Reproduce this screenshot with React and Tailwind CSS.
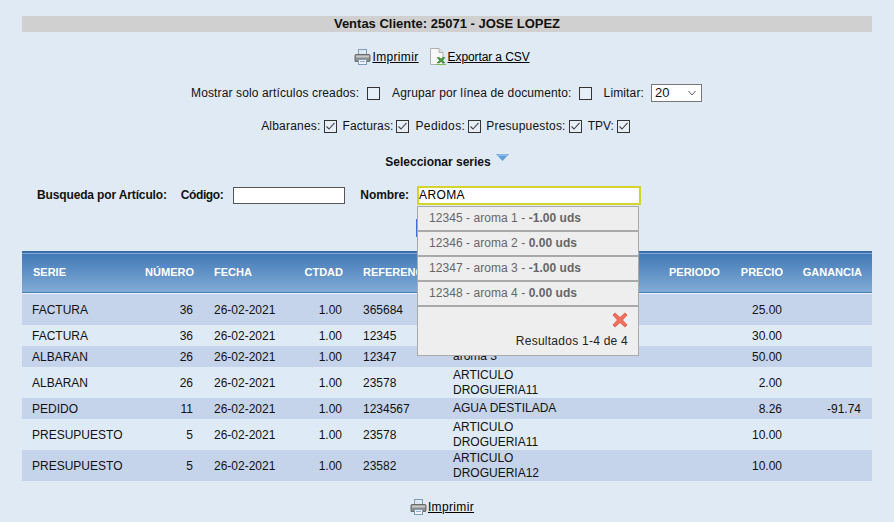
const rows = [
  ["FACTURA", "36", "26-02-2021", "1.00", "365684", "", "", "25.00", "", "h-8 [&>td]:pt-[2px]", "bg-[#c5d4eb]"],
  ["FACTURA", "36", "26-02-2021", "1.00", "12345", "", "", "30.00", "", "h-[21px]", "bg-[#deeaf6]"],
  ["ALBARAN", "26", "26-02-2021", "1.00", "12347", "aroma 3", "", "50.00", "", "h-[21px]", "bg-[#c5d4eb]"],
  ["ALBARAN", "26", "26-02-2021", "1.00", "23578", "ARTICULO DROGUERIA11", "", "2.00", "", "h-[31px]", "bg-[#deeaf6]"],
  ["PEDIDO", "11", "26-02-2021", "1.00", "1234567", "AGUA DESTILADA", "", "8.26", "-91.74", "h-[21px]", "bg-[#c5d4eb]"],
  ["PRESUPUESTO", "5", "26-02-2021", "1.00", "23578", "ARTICULO DROGUERIA11", "", "10.00", "", "h-[31px]", "bg-[#deeaf6]"],
  ["PRESUPUESTO", "5", "26-02-2021", "1.00", "23582", "ARTICULO DROGUERIA12", "", "10.00", "", "h-[31px]", "bg-[#c5d4eb]"],
];

const suggestions = [
  ["12345 - aroma 1 - ", "-1.00 uds"],
  ["12346 - aroma 2 - ", "0.00 uds"],
  ["12347 - aroma 3 - ", "-1.00 uds"],
  ["12348 - aroma 4 - ", "0.00 uds"],
];

function PrinterIcon() {
  return (
    <svg width="17" height="16" viewBox="0 0 17 16" className="shrink-0">
      <rect x="4.500" y=".5" width="8" height="5" fill="#dfe8f2" stroke="#7f9cbb" />
      <path d="M1 6.500Q1 5.500 2 5.500h13q1 0 1 1v5q0 1-1 1H1z" fill="#8d8d8d" stroke="#6a6a6a" />
      <rect x="2" y="6.500" width="13" height="2" fill="#c9c9c9" />
      <rect x="4.500" y="10.500" width="8" height="5" fill="#f0f4f9" stroke="#7f9cbb" />
      <rect x="6" y="12" width="5" height="1" fill="#94aeca" />
    </svg>
  );
}

function CsvIcon() {
  return (
    <svg width="17" height="18" viewBox="0 0 17 18" className="shrink-0">
      <path d="M.5 .5h8.500l4 4v12H.5z" fill="#f8f8f8" stroke="#b0b0b0" />
      <path d="M9 .5v4h4" fill="#e4e4e4" stroke="#b0b0b0" />
      <path d="M7 9.500l2.500 3L7 15h2.500l1.500-1.500 1.500 1.500H15l-2.500-2.500 2.500-3h-2.500L11 11 9.500 9.500z" fill="#4c9a3f" stroke="#2f7a2c" strokeWidth=".5" />
      <path d="M6 16.500h10" stroke="#79b95a" />
    </svg>
  );
}

function Check({ checked }) {
  return (
    <span className="inline-flex h-[13px] w-[13px] shrink-0 items-center justify-center border border-[#333333] bg-[#e6eef7]">
      {checked && (
        <svg width="11" height="11" viewBox="0 0 11 11">
          <path d="M1.500 5.500l2.500 2.500L9.500 1.800" fill="none" stroke="#444" strokeWidth="1.1" />
        </svg>
      )}
    </span>
  );
}

function PrintLink() {
  return (
    <a className="flex items-center gap-px text-black underline">
      <PrinterIcon />
      <span className="tracking-[0.35px]">Imprimir</span>
    </a>
  );
}

export default function App() {
  return (
    <div className="h-[522px] w-[894px] overflow-hidden bg-[#e0eaf5] pt-4 font-['Liberation_Sans',Arial,sans-serif] text-xs text-[#111111]">
      <div className="mx-[22px]">
        <h1 className="h-4 bg-[#d0d0d0] text-center text-[13px] leading-4 font-bold">
          Ventas Cliente: 25071 - JOSE LOPEZ
        </h1>

        <div className="mt-4 flex h-[18px] items-center justify-center gap-[11px] pr-[10px]">
          <PrintLink />
          <a className="flex items-center gap-px text-black underline">
            <CsvIcon />
            <span className="tracking-[-0.1px]">Exportar a CSV</span>
          </a>
        </div>

        <div className="mt-[18px] flex h-[18px] items-center justify-center pr-px tracking-[0.13px]">
          <span>Mostrar solo artículos creados:</span>
          <span className="mt-px ml-2 flex"><Check /></span>
          <span className="ml-3">Agrupar por línea de documento:</span>
          <span className="mt-px ml-[7px] flex"><Check /></span>
          <span className="ml-3">Limitar:</span>
          <span className="ml-[7px] flex h-[18px] w-[51px] items-center justify-between border border-[#777777] bg-white pr-1 pl-[3px] text-[13px] tracking-normal">
            20
            <svg width="10" height="6" viewBox="0 0 10 6">
              <path d="M1.500 1l3.500 4 3.500-4" fill="none" stroke="#666" strokeWidth="1" />
            </svg>
          </span>
        </div>

        <div className="mt-[15px] flex h-[18px] items-center justify-center pr-[3px] tracking-[0.2px]">
          <span>Albaranes:</span><span className="mr-[6px] ml-[3px] flex"><Check checked /></span>
          <span className="tracking-[0.1px]">Facturas:</span><span className="mr-[6px] ml-[3px] flex"><Check checked /></span>
          <span className="tracking-[0.4px]">Pedidos:</span><span className="mr-[5px] ml-[3px] flex"><Check checked /></span>
          <span className="tracking-[0.2px]">Presupuestos:</span><span className="mr-[6px] ml-[3px] flex"><Check checked /></span>
          <span className="tracking-normal">TPV:</span><span className="ml-[3px] flex"><Check checked /></span>
        </div>

        <div className="mt-[18px] flex h-[18px] items-center justify-center gap-[5px] font-bold">
          <span>Seleccionar series</span>
          <svg width="13" height="8" viewBox="0 0 13 8" className="mb-2">
            <path d="M0 0h13L6.500 7z" fill="#5f9fdc" />
            <path d="M2 1h9" stroke="#b5d6f2" />
          </svg>
        </div>

        <div className="relative">
          <div className="mt-[15px] flex h-[18px] items-center pl-[15px] font-bold">
            <span className="tracking-[-0.14px]">Busqueda por Artículo:</span>
            <span className="ml-[14px] tracking-[-0.4px]">Código:</span>
            <span className="ml-[10px] h-[17px] w-28 border border-[#555555] bg-white" />
            <span className="ml-[15px] tracking-[-0.1px]">Nombre:</span>
            <span className="ml-2 flex h-[19px] w-[224px] items-center border-2 border-[#d4d42a] bg-white font-normal tracking-[0.4px] text-black">
              AROMA
            </span>
          </div>

          <div className="absolute top-[20px] left-[395px] z-10 w-[222px] border border-[#aaaaaa] bg-[#eeeeee] tracking-[0.05px] text-[#666666]">
            {suggestions.map(([a, b]) => (
              <div key={a} className="h-[25px] border-b-2 border-[#aaaaaa] pl-[11px] leading-[23px]">
                {a}
                <b>{b}</b>
              </div>
            ))}
            <div className="flex h-[48px] flex-col items-end pt-[5px] pr-[10px] text-black">
              <svg width="16" height="16" viewBox="0 0 16 16">
                <path
                  d="M3 1l5 4.500L13 1l2 2-4.500 5L15 13l-2 2-5-4.500L3 15l-2-2 4.500-5L1 3z"
                  fill="#f0705f"
                  stroke="#d8563f"
                  strokeWidth=".8"
                />
              </svg>
              <span className="mt-[5px] tracking-[0.25px] text-[#222222]">Resultados 1-4 de 4</span>
            </div>
          </div>

          <div className="mt-[15px] flex justify-center">
            <button className="h-[18px] w-[62px] border-l-2 border-[#3c6fd8] bg-[#e0eaf5]" />
          </div>

          <table className="mt-[14px] w-full table-fixed border-collapse">
            <colgroup>
              <col className="w-[111px]" />
              <col className="w-[71px]" />
              <col className="w-[89px]" />
              <col className="w-[60px]" />
              <col className="w-[90px]" />
              <col className="w-[216px]" />
              <col className="w-[71px]" />
              <col className="w-[63px]" />
              <col className="w-[79px]" />
            </colgroup>
            <thead>
              <tr className="h-[41px] border-t-2 border-b border-t-[#3a6ea5] border-b-[#f0f5fb] bg-linear-to-b from-[#417ab6] to-[#82abd6] text-[11px] text-white">
                <th className="pl-[11px] text-left font-bold">SERIE</th>
                <th className="pr-[10px] text-right font-bold">NÚMERO</th>
                <th className="pl-[10px] text-left font-bold">FECHA</th>
                <th className="pr-[10px] text-right font-bold">CTDAD</th>
                <th className="pl-[10px] text-left font-bold">REFERENCIA</th>
                <th />
                <th className="pl-[10px] text-left font-bold">PERIODO</th>
                <th className="pr-[10px] text-right font-bold">PRECIO</th>
                <th className="pr-[10px] text-right font-bold">GANANCIA</th>
              </tr>
            </thead>
            <tbody>
              {rows.map((r, i) => (
                <tr key={i} className={`${r[9]} ${r[10]}`}>
                  <td className="pl-[10px]">{r[0]}</td>
                  <td className="pr-[11px] text-right">{r[1]}</td>
                  <td className="pl-[10px]">{r[2]}</td>
                  <td className="pr-[11px] text-right">{r[3]}</td>
                  <td className="pl-[10px]">{r[4]}</td>
                  <td className="pr-[90px] pl-[10px] leading-[15px]">{r[5]}</td>
                  <td className="pl-[10px]">{r[6]}</td>
                  <td className="pr-[11px] text-right">{r[7]}</td>
                  <td className="pr-[11px] text-right">{r[8]}</td>
                </tr>
              ))}
            </tbody>
          </table>

          <div className="mt-[17px] flex h-[18px] items-center justify-center pr-[10px]">
            <PrintLink />
          </div>
        </div>
      </div>
    </div>
  );
}
